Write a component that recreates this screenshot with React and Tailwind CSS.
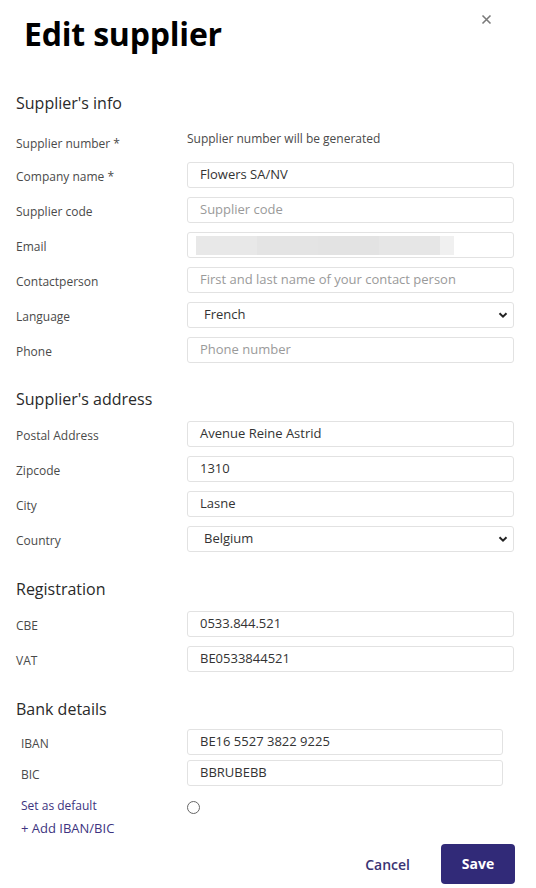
import React from "react";

const Label = ({ children, className = "" }) => (
  <div className={`w-[171px] shrink-0 text-[12px] text-[#4a4a4a] pt-[4px] ${className}`}>{children}</div>
);

const Input = ({ value, placeholder, w = "w-[327px]" }) => (
  <div className={`${w} h-[26px] border border-[#e2e2e2] rounded-[3px] flex items-center px-[12px] text-[13px] bg-white`}>
    {value ? <span className="text-[#333]">{value}</span> : <span className="text-[#9a9a9a]">{placeholder}</span>}
  </div>
);

const Select = ({ value }) => (
  <div className="w-[327px] h-[26px] border border-[#e2e2e2] rounded-[3px] flex items-center pl-[16px] pr-[5px] text-[13px] bg-white justify-between">
    <span className="text-[#333]">{value}</span>
    <svg width="10" height="10" viewBox="0 0 10 10"><path d="M1.5 3.2 L5 6.7 L8.5 3.2" stroke="#222" strokeWidth="2" fill="none" /></svg>
  </div>
);

const Row = ({ label, children, labelClass }) => (
  <div className="flex items-center h-[26px]">
    <Label className={labelClass}>{label}</Label>
    {children}
  </div>
);

const Heading = ({ children, className = "" }) => (
  <div className={`text-[16px] text-[#2a2a2a] ${className}`}>{children}</div>
);

export default function App() {
  return (
    <div className="w-[536px] h-[888px] bg-white relative" style={{ fontFamily: '"Open Sans", sans-serif' }}>
      <button className="absolute left-[481px] top-[14px] leading-none">
        <svg width="11" height="11" viewBox="0 0 11 11"><path d="M1.5 1.5 L9.5 9.5 M9.5 1.5 L1.5 9.5" stroke="#7a7a7a" strokeWidth="1.6" /></svg>
      </button>
      <div className="px-[16px]">
        <h1 className="pl-[8px] pt-[12px] text-[32px] font-bold text-black leading-[44px] tracking-[-0.2px]">Edit supplier</h1>
        <Heading className="mt-[35px]">Supplier's info</Heading>
        <div className="mt-[16px] flex flex-col gap-[9px]">
          <div className="flex h-[22px]">
            <Label className="pt-[3px]">Supplier number *</Label>
            <div className="text-[12px] text-[#4a4a4a] -mt-[1px]">Supplier number will be generated</div>
          </div>
          <Row label="Company name *"><Input value="Flowers SA/NV" /></Row>
          <Row label="Supplier code"><Input placeholder="Supplier code" /></Row>
          <Row label="Email">
            <div className="w-[327px] h-[26px] border border-[#e2e2e2] rounded-[3px] flex items-center pl-[8px] bg-white">
              <div className="flex h-[19px]">
                <div className="w-[61px] bg-[#e8e8e8]" />
                <div className="w-[61px] bg-[#e4e4e4]" />
                <div className="w-[61px] bg-[#e3e3e3]" />
                <div className="w-[61px] bg-[#e6e6e6]" />
                <div className="w-[14px] bg-[#f0f0f0]" />
              </div>
            </div>
          </Row>
          <Row label="Contactperson"><Input placeholder="First and last name of your contact person" /></Row>
          <Row label="Language"><Select value="French" /></Row>
          <Row label="Phone"><Input placeholder="Phone number" /></Row>
        </div>

        <Heading className="mt-[24px]">Supplier's address</Heading>
        <div className="mt-[10px] flex flex-col gap-[9px]">
          <Row label="Postal Address"><Input value="Avenue Reine Astrid" /></Row>
          <Row label="Zipcode"><Input value="1310" /></Row>
          <Row label="City"><Input value="Lasne" /></Row>
          <Row label="Country"><Select value="Belgium" /></Row>
        </div>

        <Heading className="mt-[25px]">Registration</Heading>
        <div className="mt-[10px] flex flex-col gap-[9px]">
          <Row label="CBE"><Input value="0533.844.521" /></Row>
          <Row label="VAT"><Input value="BE0533844521" /></Row>
        </div>

        <Heading className="mt-[25px]">Bank details</Heading>
        <div className="mt-[8px] flex flex-col gap-[5px]">
          <Row label="IBAN" labelClass="pl-[5px]"><Input value="BE16 5527 3822 9225" w="w-[316px]" /></Row>
          <Row label="BIC" labelClass="pl-[5px]"><Input value="BBRUBEBB" w="w-[316px]" /></Row>
        </div>
        <div className="mt-[10px] flex items-center h-[20px]">
          <div className="w-[171px] pl-[5px] text-[12px] text-[#3d3480]">Set as default</div>
          <div className="w-[13px] h-[13px] rounded-full border border-[#666] mt-[3px]" />
        </div>
        <div className="mt-[3px] pl-[5px] text-[13px] text-[#3d3480]">+ Add IBAN/BIC</div>

        <div className="mt-[5px] flex justify-end items-center gap-[31px] pr-[5px]">
          <button className="text-[14px] text-[#3a3373] font-semibold mt-[1px]">Cancel</button>
          <button className="w-[74px] h-[40px] rounded-[4px] bg-[#312a78] text-white text-[14px] font-bold">Save</button>
        </div>
      </div>
    </div>
  );
}
